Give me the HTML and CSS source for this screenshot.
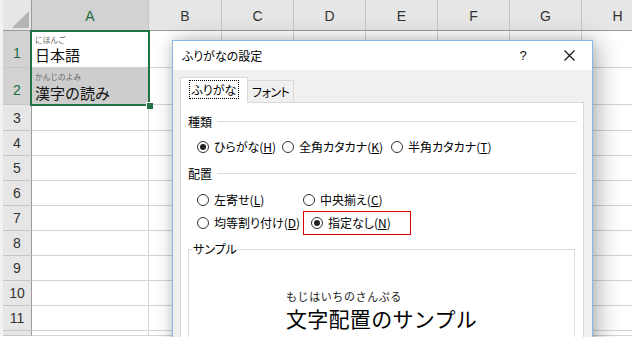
FILE: index.html
```html
<!DOCTYPE html>
<html lang="ja">
<head>
<meta charset="utf-8">
<link rel="stylesheet" href="styles.css">
</head>
<body>
<div class="app">
  <div class="sheet">
    <div class="corner"><svg width="17" height="17" viewBox="0 0 17 17"><polygon points="17,0 17,17 0,17" fill="#b4b4b4"/></svg></div>
    <div class="colhead sel">A</div>
    <div class="colhead">B</div>
    <div class="colhead">C</div>
    <div class="colhead">D</div>
    <div class="colhead">E</div>
    <div class="colhead">F</div>
    <div class="colhead">G</div>
    <div class="colhead">H</div>

    <div class="rowhead sel">1</div>
    <div class="cell text"><span class="furi">にほんご</span><span class="base">日本語</span></div>
    <div class="cell"></div><div class="cell"></div><div class="cell"></div><div class="cell"></div><div class="cell"></div><div class="cell"></div><div class="cell"></div>

    <div class="rowhead sel">2</div>
    <div class="cell text range"><span class="furi">かんじのよみ</span><span class="base">漢字の読み</span></div>
    <div class="cell"></div><div class="cell"></div><div class="cell"></div><div class="cell"></div><div class="cell"></div><div class="cell"></div><div class="cell"></div>

    <div class="rowhead">3</div><div class="cell"></div><div class="cell"></div><div class="cell"></div><div class="cell"></div><div class="cell"></div><div class="cell"></div><div class="cell"></div><div class="cell"></div>
    <div class="rowhead">4</div><div class="cell"></div><div class="cell"></div><div class="cell"></div><div class="cell"></div><div class="cell"></div><div class="cell"></div><div class="cell"></div><div class="cell"></div>
    <div class="rowhead">5</div><div class="cell"></div><div class="cell"></div><div class="cell"></div><div class="cell"></div><div class="cell"></div><div class="cell"></div><div class="cell"></div><div class="cell"></div>
    <div class="rowhead">6</div><div class="cell"></div><div class="cell"></div><div class="cell"></div><div class="cell"></div><div class="cell"></div><div class="cell"></div><div class="cell"></div><div class="cell"></div>
    <div class="rowhead">7</div><div class="cell"></div><div class="cell"></div><div class="cell"></div><div class="cell"></div><div class="cell"></div><div class="cell"></div><div class="cell"></div><div class="cell"></div>
    <div class="rowhead">8</div><div class="cell"></div><div class="cell"></div><div class="cell"></div><div class="cell"></div><div class="cell"></div><div class="cell"></div><div class="cell"></div><div class="cell"></div>
    <div class="rowhead">9</div><div class="cell"></div><div class="cell"></div><div class="cell"></div><div class="cell"></div><div class="cell"></div><div class="cell"></div><div class="cell"></div><div class="cell"></div>
    <div class="rowhead">10</div><div class="cell"></div><div class="cell"></div><div class="cell"></div><div class="cell"></div><div class="cell"></div><div class="cell"></div><div class="cell"></div><div class="cell"></div>
    <div class="rowhead">11</div><div class="cell"></div><div class="cell"></div><div class="cell"></div><div class="cell"></div><div class="cell"></div><div class="cell"></div><div class="cell"></div><div class="cell"></div>
    <div class="rowhead"></div><div class="cell"></div><div class="cell"></div><div class="cell"></div><div class="cell"></div><div class="cell"></div><div class="cell"></div><div class="cell"></div><div class="cell"></div>

    <div class="selection"><span class="handle"></span></div>
  </div>

  <div class="dialog">
    <div class="titlebar">
      <span class="title">ふりがなの設定</span>
      <span class="tb-btn help">?</span>
      <span class="tb-btn close"><svg width="11" height="11" viewBox="0 0 11 11"><path d="M0.5 0.5 L10.5 10.5 M10.5 0.5 L0.5 10.5" stroke="#111" stroke-width="1.1" fill="none"/></svg></span>
    </div>
    <div class="dlg-body">
      <div class="tabs">
        <div class="tab active"><span class="focus">ふりがな</span></div>
        <div class="tab">フォント</div>
      </div>
      <div class="panel">
        <div class="heading"><span>種類</span><i class="rule"></i></div>
        <div class="opts row-kind">
          <label class="opt w1"><span class="radio on"></span>ひらがな(<u>H</u>)</label>
          <label class="opt w2"><span class="radio"></span>全角カタカナ(<u>K</u>)</label>
          <label class="opt"><span class="radio"></span>半角カタカナ(<u>T</u>)</label>
        </div>
        <div class="heading h2"><span>配置</span><i class="rule"></i></div>
        <div class="opts row-a">
          <label class="opt w3"><span class="radio"></span>左寄せ(<u>L</u>)</label>
          <label class="opt"><span class="radio"></span>中央揃え(<u>C</u>)</label>
        </div>
        <div class="opts row-b">
          <label class="opt w3b"><span class="radio"></span>均等割り付け(<u>D</u>)</label>
          <label class="opt marked"><span class="radio on"></span>指定なし(<u>N</u>)</label>
        </div>
        <fieldset class="sample">
          <legend>サンプル</legend>
          <div class="sample-inner">
            <div class="sample-text">
              <span class="s-furi">もじはいちのさんぷる</span>
              <span class="s-base">文字配置のサンプル</span>
            </div>
          </div>
        </fieldset>
      </div>
    </div>
  </div>
</div>
</body>
</html>
```

FILE: styles.css
```css
* { box-sizing: border-box; }
html, body { margin: 0; padding: 0; background: #fff; }
.app {
  position: relative;
  width: 632px;
  height: 337px;
  overflow: hidden;
  font-family: "Noto Sans CJK JP", sans-serif;
}

/* ---------- spreadsheet ---------- */
.sheet {
  position: relative;
  display: grid;
  grid-template-columns: 29px 117px 73px repeat(6, 72px);
  grid-template-rows: 31px 37px 37px 26px repeat(8, 25px);
  padding-left: 3px;
  background: #f2f2f2;
  width: 700px;
}
.corner {
  background: #e6e6e6;
  border-right: 1px solid #9b9b9b;
  border-bottom: 1px solid #9b9b9b;
  display: flex;
  align-items: flex-end;
  justify-content: flex-end;
  padding: 0 2px 2px 0;
}
.corner svg { display: block; }
.colhead {
  background: #e6e6e6;
  border-right: 1px solid #c6c6c6;
  border-bottom: 1px solid #9b9b9b;
  display: flex;
  align-items: center;
  justify-content: center;
  font-family: "Liberation Sans", Arial, sans-serif;
  font-size: 14px;
  color: #333;
  padding-top: 1px;
}
.colhead.sel { background: #d2d2d2; color: #1e6b41; }
.rowhead {
  background: #e6e6e6;
  border-right: 1px solid #9b9b9b;
  border-bottom: 1px solid #c6c6c6;
  display: flex;
  align-items: flex-end;
  justify-content: center;
  padding-bottom: 4px;
  font-family: "Liberation Sans", Arial, sans-serif;
  font-size: 14px;
  color: #333;
}
.rowhead.sel { background: #d2d2d2; color: #1e6b41; padding-bottom: 6px; }
.cell {
  background: #fff;
  border-right: 1px solid #d4d4d4;
  border-bottom: 1px solid #d4d4d4;
}
.cell.text {
  display: flex;
  flex-direction: column;
  padding: 4px 0 0 3px;
}
.cell.range { background: #cdcdcd; }
.furi {
  font-size: 7.5px;
  line-height: 10px;
  color: #666;
  letter-spacing: 0.2px;
}
.base {
  font-size: 15px;
  line-height: 18px;
  margin-top: 1px;
  color: #111;
}
.cell.range .base { margin-top: 2px; }
.selection {
  position: absolute;
  left: 30px;
  top: 30px;
  width: 120px;
  height: 76px;
  border: 2px solid #217346;
  pointer-events: none;
}
.handle {
  position: absolute;
  right: -5px;
  bottom: -5px;
  width: 7px;
  height: 7px;
  background: #217346;
  border: 1px solid #fff;
  border-right: 0;
  border-bottom: 0;
}

/* ---------- dialog ---------- */
.dialog {
  position: absolute;
  left: 172px;
  top: 40px;
  width: 421px;
  height: 330px;
  border: 1px solid #88b7e8;
  background: #f0f0f0;
  box-shadow: 6px 2px 22px rgba(0, 0, 0, 0.28), -1px 0 10px rgba(0, 0, 0, 0.12);
  font-size: 12px;
  color: #000;
  font-feature-settings: "palt";
}
.titlebar {
  height: 29px;
  background: #fff;
  display: flex;
  align-items: center;
  padding-left: 9px;
}
.title { flex: 1; font-size: 12px; }
.tb-btn {
  width: 46px;
  height: 29px;
  display: flex;
  align-items: center;
  justify-content: center;
}
.help {
  font-family: "Liberation Sans", Arial, sans-serif;
  font-size: 13px;
  color: #111;
}
.close svg { display: block; }

.dlg-body { padding: 7px 8px 0 7px; }
.tabs {
  display: flex;
  align-items: flex-end;
  height: 25px;
  position: relative;
  z-index: 1;
}
.tab {
  height: 22px;
  padding: 0 4px;
  border: 1px solid #d9d9d9;
  border-bottom: 0;
  border-left: 0;
  background: #f0f0f0;
  display: flex;
  align-items: center;
  justify-content: center;
  font-size: 12px;
  white-space: nowrap;
  letter-spacing: -0.5px;
}
.tab.active {
  width: 68px;
  height: 26px;
  margin-bottom: -1px;
  border-left: 1px solid #d9d9d9;
  background: #fff;
  padding: 0 0 3px 0;
  letter-spacing: 0;
}
.focus {
  border: 1px dotted #000;
  line-height: 17px;
  width: 50px;
  text-align: center;
  white-space: nowrap;
}
.panel {
  background: #fff;
  border: 1px solid #d9d9d9;
  height: 260px;
  padding: 10px 6px 0 7px;
}
.heading {
  display: flex;
  align-items: center;
  height: 17px;
}
.heading span { font-size: 12px; line-height: 17px; }
.rule {
  flex: 1;
  height: 1px;
  background: #dcdcdc;
  margin-left: 5px;
}
.heading.h2 { margin-top: 10px; }
.opts {
  display: flex;
  align-items: center;
  padding-left: 9px;
  height: 17px;
}
.row-kind { margin-top: 8px; }
.row-a { margin-top: 9px; }
.row-b { margin-top: 6px; }
.opt {
  display: flex;
  align-items: center;
  white-space: nowrap;
  font-size: 12px;
  line-height: 17px;
}
.opt u { text-decoration: underline; text-underline-offset: 1px; }
.w1 { width: 85px; }
.w2 { width: 109px; }
.w3, .w3b { width: 106px; }
.radio {
  width: 12px;
  height: 12px;
  border: 1px solid #333;
  border-radius: 50%;
  background: #fff;
  margin-right: 5px;
  display: flex;
  align-items: center;
  justify-content: center;
  flex: none;
}
.radio.on::after {
  content: "";
  width: 6px;
  height: 6px;
  border-radius: 50%;
  background: #222;
}
.opt.marked {
  width: 108px;
  height: 24px;
  border: 1px solid #e00000;
  padding-left: 7px;
}
.sample {
  margin: 11px 2px 0 0;
  padding: 0 4px;
  border: 1px solid #dcdcdc;
  height: 120px;
  min-width: 0;
}
.sample legend {
  padding: 0;
  font-size: 12px;
  line-height: 14px;
}
.sample-inner {
  display: flex;
  justify-content: center;
  padding-top: 34px;
}
.sample-text {
  display: flex;
  flex-direction: column;
  align-items: flex-start;
  font-feature-settings: normal;
}
.s-furi {
  font-size: 11px;
  line-height: 13px;
  letter-spacing: 0.6px;
  color: #222;
}
.s-base {
  font-size: 21px;
  line-height: 24px;
  margin-top: 3px;
  color: #000;
  letter-spacing: 0.3px;
}
```
